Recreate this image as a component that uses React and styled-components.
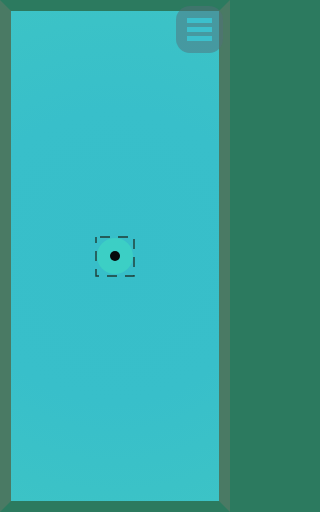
import styled, { createGlobalStyle } from "styled-components";

const Global = createGlobalStyle`
  html, body {
    margin: 0;
    padding: 0;
    background: #2c7a5f;
    font-family: "Liberation Sans", Arial, sans-serif;
  }
`;

const Frame = styled.div`
  position: relative;
  box-sizing: border-box;
  width: 230px;
  height: 512px;
  border-style: solid;
  border-width: 11px;
  border-color: #2c7a5f #4a7a64 #2c7a5f #4a7a64;
  background: radial-gradient(
    circle at 50% 50%,
    #37bec9 0%,
    #38bfca 55%,
    #3cc3c6 100%
  );
  display: flex;
  align-items: center;
  justify-content: center;
`;

const MenuButton = styled.button`
  position: absolute;
  top: -5px;
  right: -4px;
  width: 47px;
  height: 47px;
  border: none;
  border-radius: 14px;
  background: rgba(82, 112, 122, 0.5);
  padding: 0;
  display: flex;
  flex-direction: column;
  align-items: center;
  justify-content: center;
  gap: 4px;
  cursor: pointer;
`;

const Bar = styled.span`
  display: block;
  width: 25px;
  height: 5px;
  background: #3cc0cc;
`;

const Target = styled.div`
  position: relative;
  width: 40px;
  height: 41px;
  display: flex;
  align-items: center;
  justify-content: center;
`;

const Disc = styled.div`
  width: 36px;
  height: 36px;
  border-radius: 50%;
  background: #3ccfc5;
  display: flex;
  align-items: center;
  justify-content: center;
`;

const Dot = styled.div`
  width: 10px;
  height: 10px;
  border-radius: 50%;
  background: #060a0a;
`;

const Outline = styled.svg`
  position: absolute;
  inset: 0;
  width: 100%;
  height: 100%;
  pointer-events: none;
`;

export default function App() {
  return (
    <>
      <Global />
      <Frame>
        <Target>
          <Disc>
            <Dot />
          </Disc>
          <Outline viewBox="0 0 40 41">
            <rect
              x="1"
              y="1"
              width="38"
              height="39"
              fill="none"
              stroke="#1f3d36"
              strokeWidth="1.4"
              strokeDasharray="10 8"
              strokeDashoffset="-4"
            />
          </Outline>
        </Target>
        <MenuButton aria-label="menu">
          <Bar />
          <Bar />
          <Bar />
        </MenuButton>
      </Frame>
    </>
  );
}
